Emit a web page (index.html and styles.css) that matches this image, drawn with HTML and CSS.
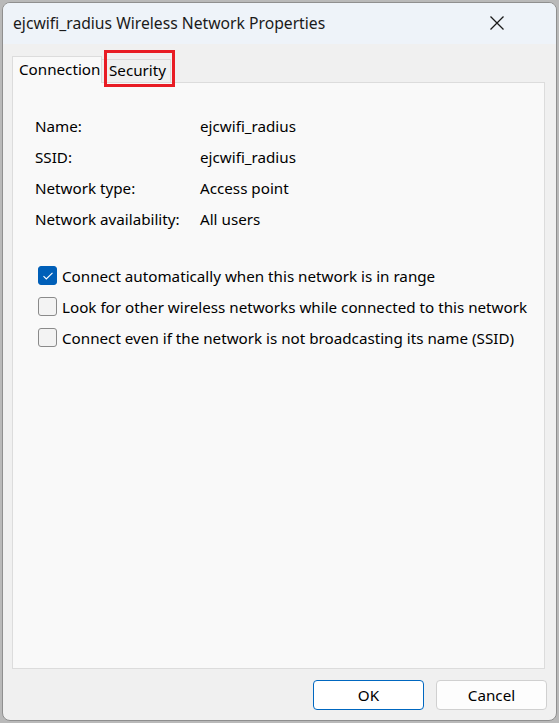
FILE: index.html
```html
<!DOCTYPE html>
<html>
<head>
<meta charset="utf-8">
<link rel="stylesheet" href="styles.css">
</head>
<body>
<div class="window">
  <div class="titlebar">
    <span class="title">ejcwifi_radius Wireless Network Properties</span>
    <svg class="close" width="16" height="16" viewBox="0 0 16 16"><path d="M1.5 1.5 L14.5 14.5 M14.5 1.5 L1.5 14.5" stroke="#1a1a1a" stroke-width="1.3" fill="none"/></svg>
  </div>
  <div class="body">
    <div class="tabs">
      <div class="tab active">Connection</div>
      <div class="tab">Security</div>
      <div class="highlight"></div>
    </div>
    <div class="panel">
      <div class="info">
        <div class="row"><span class="lbl">Name:</span><span>ejcwifi_radius</span></div>
        <div class="row"><span class="lbl">SSID:</span><span>ejcwifi_radius</span></div>
        <div class="row"><span class="lbl">Network type:</span><span>Access point</span></div>
        <div class="row"><span class="lbl">Network availability:</span><span>All users</span></div>
      </div>
      <div class="checks">
        <div class="check"><span class="box checked"><svg width="12" height="10" viewBox="0 0 12 10"><path d="M1.5 5.2 L4.3 8 L10.5 1.8" stroke="#fff" stroke-width="1.1" fill="none"/></svg></span>Connect automatically when this network is in range</div>
        <div class="check"><span class="box"></span>Look for other wireless networks while connected to this network</div>
        <div class="check"><span class="box"></span>Connect even if the network is not broadcasting its name (SSID)</div>
      </div>
    </div>
    <div class="buttons">
      <button class="btn primary">OK</button>
      <button class="btn">Cancel</button>
    </div>
  </div>
</div>
</body>
</html>
```
FILE: styles.css
```css
html, body {
  margin: 0;
  padding: 0;
}
body {
  width: 559px;
  height: 723px;
  overflow: hidden;
  background: #b9b9b9;
  font-family: "Noto Sans", "Liberation Sans", sans-serif;
  font-size: 15.2px;
  color: #000;
}
.window {
  margin: 2px 0 0 2px;
  width: 555px;
  height: 719px;
  box-sizing: border-box;
  border: 1px solid #8f8f8f;
  border-radius: 8px;
  overflow: hidden;
  background: #f0f0f0;
  display: flex;
  flex-direction: column;
}
.titlebar {
  height: 41px;
  background: #eef3f9;
  display: flex;
  align-items: center;
  justify-content: space-between;
  padding: 0 51px 0 10px;
  flex-shrink: 0;
}
.title {
  font-size: 15.7px;
  color: #1a1a1a;
  margin-top: -2px;
}
.close {
  margin-top: -2px;
}
.body {
  flex: 1;
  display: flex;
  flex-direction: column;
  padding: 11px 0 0 9px;
}
.tabs {
  position: relative;
  display: flex;
  align-items: flex-end;
  height: 27px;
}
.tab {
  box-sizing: border-box;
  height: 23px;
  padding: 0 4px 0 7px;
  border: 1px solid #dcdcdc;
  border-bottom: none;
  border-left: none;
  background: #f0f0f0;
  line-height: 21px;
}
.tab.active {
  height: 27px;
  width: 90px;
  padding: 2px 0 0 6px;
  background: #f9f9f9;
  border-left: 1px solid #dcdcdc;
  margin-bottom: -1px;
  position: relative;
  z-index: 1;
  line-height: 20px;
}
.highlight {
  position: absolute;
  left: 92px;
  top: -5px;
  width: 71px;
  height: 37px;
  box-sizing: border-box;
  border: 3px solid #e81c24;
}
.panel {
  width: 533px;
  height: 587px;
  box-sizing: border-box;
  border: 1px solid #dcdcdc;
  background: #f9f9f9;
  padding: 27px 0 0 22px;
}
.row {
  display: flex;
  height: 31px;
  align-items: center;
}
.lbl {
  width: 165px;
}
.checks {
  margin-top: 26px;
}
.check {
  display: flex;
  align-items: center;
  height: 31px;
}
.box {
  box-sizing: border-box;
  width: 19px;
  height: 19px;
  border: 1px solid #8a8a8a;
  border-radius: 3px;
  background: #f3f3f3;
  margin: 0 5px 0 3px;
  display: flex;
  align-items: center;
  justify-content: center;
}
.box.checked {
  background: #005fb8;
  border-color: #005fb8;
}
.buttons {
  display: flex;
  justify-content: flex-end;
  gap: 12px;
  padding: 11px 9px 0 0;
}
.btn {
  width: 111px;
  height: 30px;
  box-sizing: border-box;
  border: 1px solid #d0d0d0;
  border-radius: 4px;
  background: #fdfdfd;
  font-family: "Noto Sans", "Liberation Sans", sans-serif;
  font-size: 15.2px;
  color: #000;
  padding: 0;
}
.btn.primary {
  border-color: #0067c0;
  background: #ffffff;
}
```
